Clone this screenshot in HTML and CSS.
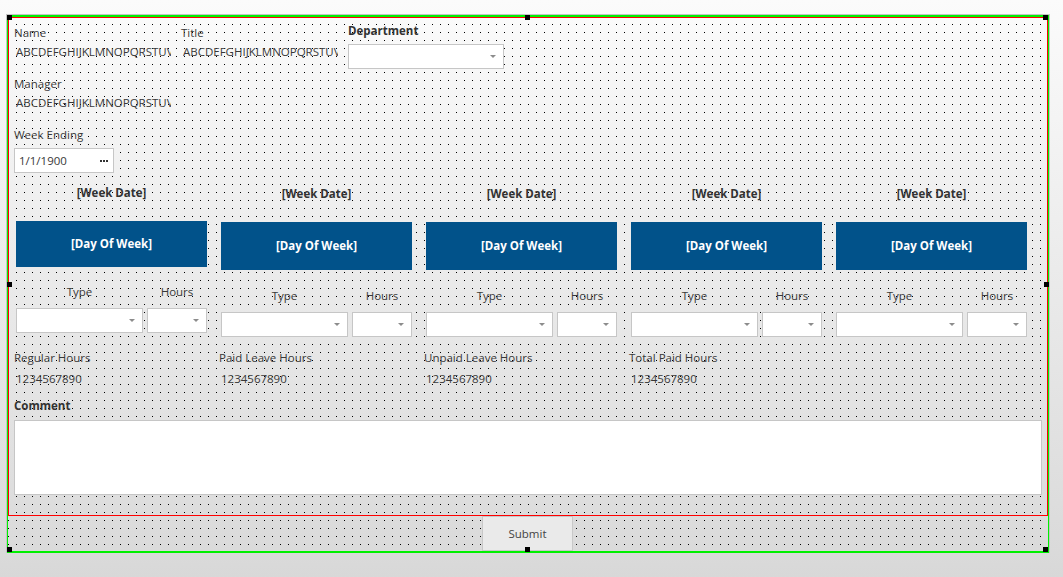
FILE: index.html
```html
<!DOCTYPE html>
<html>
<head>
<meta charset="utf-8">
<link rel="stylesheet" href="styles.css">
</head>
<body>
<div class="frame">
  <div class="form">
    <div class="panel">
      <div class="top-grid">
        <div class="field field-plain">
          <div class="label">Name</div>
          <div class="value">ABCDEFGHIJKLMNOPQRSTUVWXYZ</div>
        </div>
        <div class="field field-plain">
          <div class="label">Title</div>
          <div class="value">ABCDEFGHIJKLMNOPQRSTUVWXYZ</div>
        </div>
        <div class="field">
          <div class="label bold">Department</div>
          <div class="combo combo-dept"><svg class="arrow" width="6" height="3" viewBox="0 0 6 3"><polygon points="0,0 6,0 3,3"/></svg></div>
        </div>
      </div>

      <div class="field manager">
        <div class="label">Manager</div>
        <div class="value">ABCDEFGHIJKLMNOPQRSTUVWXYZ</div>
      </div>

      <div class="week-ending">
        <div class="label">Week Ending</div>
        <div class="datebox"><span>1/1/1900</span><svg class="dots" width="8" height="2" viewBox="0 0 8 2"><rect x="0" y="0" width="2" height="2"/><rect x="3" y="0" width="2" height="2"/><rect x="6" y="0" width="2" height="2"/></svg></div>
      </div>

      <div class="days">
        <div class="day day-first">
          <div class="week-date">[Week Date]</div>
          <div class="day-box">[Day Of Week]</div>
          <div class="entry-labels"><span class="type-label">Type</span><span class="hours-label">Hours</span></div>
          <div class="entry-row">
            <div class="combo combo-type"><svg class="arrow" width="6" height="3" viewBox="0 0 6 3"><polygon points="0,0 6,0 3,3"/></svg></div>
            <div class="combo combo-hours"><svg class="arrow" width="6" height="3" viewBox="0 0 6 3"><polygon points="0,0 6,0 3,3"/></svg></div>
          </div>
        </div>
        <div class="day">
          <div class="week-date">[Week Date]</div>
          <div class="day-box">[Day Of Week]</div>
          <div class="entry-labels"><span class="type-label">Type</span><span class="hours-label">Hours</span></div>
          <div class="entry-row">
            <div class="combo combo-type"><svg class="arrow" width="6" height="3" viewBox="0 0 6 3"><polygon points="0,0 6,0 3,3"/></svg></div>
            <div class="combo combo-hours"><svg class="arrow" width="6" height="3" viewBox="0 0 6 3"><polygon points="0,0 6,0 3,3"/></svg></div>
          </div>
        </div>
        <div class="day">
          <div class="week-date">[Week Date]</div>
          <div class="day-box">[Day Of Week]</div>
          <div class="entry-labels"><span class="type-label">Type</span><span class="hours-label">Hours</span></div>
          <div class="entry-row">
            <div class="combo combo-type"><svg class="arrow" width="6" height="3" viewBox="0 0 6 3"><polygon points="0,0 6,0 3,3"/></svg></div>
            <div class="combo combo-hours"><svg class="arrow" width="6" height="3" viewBox="0 0 6 3"><polygon points="0,0 6,0 3,3"/></svg></div>
          </div>
        </div>
        <div class="day">
          <div class="week-date">[Week Date]</div>
          <div class="day-box">[Day Of Week]</div>
          <div class="entry-labels"><span class="type-label">Type</span><span class="hours-label">Hours</span></div>
          <div class="entry-row">
            <div class="combo combo-type"><svg class="arrow" width="6" height="3" viewBox="0 0 6 3"><polygon points="0,0 6,0 3,3"/></svg></div>
            <div class="combo combo-hours"><svg class="arrow" width="6" height="3" viewBox="0 0 6 3"><polygon points="0,0 6,0 3,3"/></svg></div>
          </div>
        </div>
        <div class="day">
          <div class="week-date">[Week Date]</div>
          <div class="day-box">[Day Of Week]</div>
          <div class="entry-labels"><span class="type-label">Type</span><span class="hours-label">Hours</span></div>
          <div class="entry-row">
            <div class="combo combo-type"><svg class="arrow" width="6" height="3" viewBox="0 0 6 3"><polygon points="0,0 6,0 3,3"/></svg></div>
            <div class="combo combo-hours"><svg class="arrow" width="6" height="3" viewBox="0 0 6 3"><polygon points="0,0 6,0 3,3"/></svg></div>
          </div>
        </div>
      </div>

      <div class="totals">
        <div class="total"><div class="label">Regular Hours</div><div class="total-value">1234567890</div></div>
        <div class="total"><div class="label">Paid Leave Hours</div><div class="total-value">1234567890</div></div>
        <div class="total"><div class="label">Unpaid Leave Hours</div><div class="total-value">1234567890</div></div>
        <div class="total"><div class="label">Total Paid Hours</div><div class="total-value">1234567890</div></div>
      </div>

      <div class="label bold comment-label">Comment</div>
      <div class="comment-box"></div>
    </div>

    <div class="submit-row"><button class="submit" type="button">Submit</button></div>

    <span class="handle h-tl"></span>
    <span class="handle h-tm"></span>
    <span class="handle h-tr"></span>
    <span class="handle h-ml"></span>
    <span class="handle h-mr"></span>
    <span class="handle h-bl"></span>
    <span class="handle h-bm"></span>
    <span class="handle h-br"></span>
  </div>
</div>
</body>
</html>
```

FILE: styles.css
```css
html {
  height: 100%;
  background: #d8d8d8;
}

body {
  margin: 0;
  height: 577px;
  overflow: hidden;
  background: linear-gradient(to bottom, #fbfbfb 0, #dadada 553px, #d8d8d8 577px);
  font-family: "Open Sans", "Noto Sans", sans-serif;
  font-size: 11.5px;
  color: #383838;
}

.frame {
  margin: 14px 0 0 6px;
  width: 1044px;
  box-sizing: border-box;
  border: 1px solid #c4c4c4;
  border-bottom: 0;
}

.form {
  position: relative;
  height: 538px;
  box-sizing: border-box;
  border: 1px solid #00f000;
  border-top-width: 2px;
  border-bottom-width: 2px;
  background-image: url("data:image/svg+xml,%3Csvg xmlns='http://www.w3.org/2000/svg' width='8' height='8' shape-rendering='crispEdges'%3E%3Crect width='1' height='1' fill='%23000'/%3E%3C/svg%3E");
  background-size: 8px 8px;
  background-position: 0 -1px;
}

.panel {
  height: 499px;
  box-sizing: border-box;
  border: 1px solid #ff0000;
  padding: 0 0 0 5px;
}

.label {
  line-height: 16px;
  white-space: nowrap;
}

.bold {
  font-weight: 700;
  color: #333;
}

.top-grid {
  display: grid;
  grid-template-columns: 167px 167px 156px;
  align-items: start;
  margin-top: 5px;
}

.field-plain .label {
  padding-top: 2px;
}

.value {
  width: 155px;
  margin: 3px 0 0 2px;
  line-height: 16px;
  white-space: nowrap;
  overflow: hidden;
}

.combo {
  display: flex;
  align-items: center;
  justify-content: flex-end;
  height: 25px;
  box-sizing: border-box;
  padding-right: 7px;
  background: #fff;
  border: 1px solid #c6c6c6;
}

.arrow {
  display: block;
  fill: #8c8c8c;
}

.combo-dept {
  width: 156px;
  margin-top: 5px;
}

.manager {
  margin-top: 7px;
}

.week-ending {
  margin-top: 16px;
}

.datebox {
  display: flex;
  align-items: center;
  justify-content: space-between;
  width: 100px;
  height: 25px;
  margin-top: 5px;
  box-sizing: border-box;
  padding: 0 5px 0 4px;
  background: #fff;
  border: 1px solid #c6c6c6;
  line-height: 16px;
}

.dots {
  display: block;
  fill: #333;
}

.days {
  display: flex;
  align-items: flex-start;
  gap: 14px;
  margin: 12px 0 0 2px;
}

.day {
  width: 191px;
}

.week-date {
  padding-top: 1px;
  line-height: 16px;
  font-weight: 700;
  color: #333;
  text-align: center;
  white-space: nowrap;
}

.day-box {
  display: flex;
  align-items: center;
  justify-content: center;
  height: 48px;
  margin-top: 20px;
  background: #01528a;
  color: #fff;
  font-weight: 700;
  line-height: 16px;
  white-space: nowrap;
}

.entry-labels {
  display: flex;
  gap: 4px;
  margin-top: 18px;
  line-height: 16px;
}

.type-label {
  width: 127px;
  text-align: center;
}

.hours-label {
  width: 60px;
  text-align: center;
}

.entry-row {
  display: flex;
  gap: 4px;
  margin-top: 8px;
}

.combo-type {
  width: 127px;
}

.combo-hours {
  width: 60px;
}

.day-first .week-date {
  padding-top: 0;
}

.day-first .day-box {
  height: 46px;
}

.day-first .entry-labels {
  margin-top: 17px;
}

.totals {
  display: grid;
  grid-template-columns: repeat(4, 205px);
  margin-top: 13px;
}

.total-value {
  margin: 5px 0 0 2px;
  line-height: 16px;
}

.comment-label {
  margin-top: 11px;
}

.comment-box {
  width: 1028px;
  height: 75px;
  margin-top: 6px;
  box-sizing: border-box;
  background: #fff;
  border: 1px solid #c6c6c6;
}

.submit-row {
  display: flex;
  height: 35px;
  padding-left: 474px;
}

.submit {
  width: 91px;
  height: 35px;
  padding: 0;
  box-sizing: border-box;
  border: 1px solid #c8c8c8;
  background: #eaeaea;
  color: #444;
  font: inherit;
}

.handle {
  position: absolute;
  z-index: 2;
  width: 5px;
  height: 5px;
  background: #000;
}

.h-tl { left: -1px; top: -2px; }
.h-tm { left: 517px; top: -2px; }
.h-tr { left: 1035px; top: -2px; }
.h-ml { left: -1px; top: 265px; }
.h-mr { left: 1036px; top: 265px; }
.h-bl { left: -1px; top: 530px; }
.h-bm { left: 517px; top: 530px; }
.h-br { left: 1035px; top: 530px; }
```
